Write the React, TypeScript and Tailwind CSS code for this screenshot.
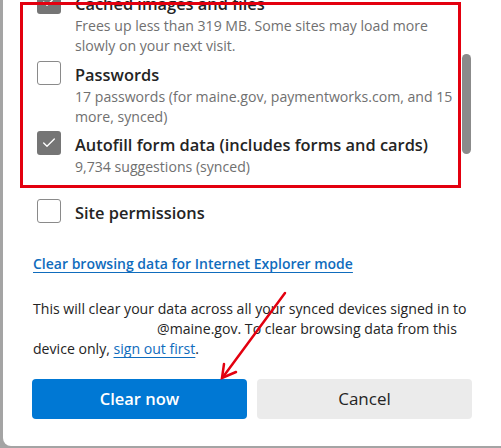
import { Check } from "lucide-react"

type Row = {
    title: string
    desc: string[]
    checked: boolean
    top: string
}

const rows: Row[] = [
    { title: "Cached images and files", desc: ["Frees up less than 319 MB. Some sites may load more", "slowly on your next visit."], checked: true, top: "mt-[-10px]" },
    { title: "Passwords", desc: ["17 passwords (for maine.gov, paymentworks.com, and 15", "more, synced)"], checked: false, top: "mt-[5px]" },
    { title: "Autofill form data (includes forms and cards)", desc: ["9,734 suggestions (synced)"], checked: true, top: "mt-[4px]" },
    { title: "Site permissions", desc: [], checked: false, top: "mt-[22px]" },
]

function Box({ checked }: { checked: boolean }) {
    if (checked) {
        return (
            <div className="w-6 h-6 shrink-0 rounded-[3px] bg-[#757575] flex items-center justify-center">
                <Check className="w-4 h-4 text-white" strokeWidth={2} />
            </div>
        )
    }
    return <div className="w-6 h-6 shrink-0 rounded-[3px] border border-[#8a8a8a] bg-white" />
}

export default function App() {
    return (
        <div className="w-[501px] h-[448px] bg-[#a4a4a4] overflow-hidden" style={{ fontFamily: '"Segoe UI", "Open Sans", sans-serif' }}>
            <div className="relative ml-[3px] h-[446px] bg-white rounded-bl-[8px] overflow-hidden">
                <div className="pl-[34px]">
                    {rows.map(r => (
                        <div key={r.title} className={`flex items-start gap-[14px] ${r.top}`}>
                            <Box checked={r.checked} />
                            <div className="pt-[2px] whitespace-nowrap">
                                <div className="text-[16.4px] leading-[24px] font-semibold text-[#242424]">{r.title}</div>
                                {r.desc.map(d => (
                                    <div key={d} className="text-[14.1px] leading-[20px] text-[#707070]">{d}</div>
                                ))}
                            </div>
                        </div>
                    ))}
                </div>

                <div className="pl-[30px] mt-[28px] leading-[20px]">
                    <a className="text-[14px] font-semibold text-[#0f6cbd] underline underline-offset-[3px]">
                        Clear browsing data for Internet Explorer mode
                    </a>
                </div>

                <div className="pl-[30px] mt-[25px] text-[14.1px] leading-[20px] text-[#242424] whitespace-nowrap">
                    <div>This will clear your data across all your synced devices signed in to</div>
                    <div><span className="inline-block w-[124px]" />@maine.gov. To clear browsing data from this</div>
                    <div>device only, <a className="text-[#0f6cbd] underline underline-offset-[3px]">sign out first</a>.</div>
                </div>

                <div className="flex gap-[10px] pl-[29px] pr-[27px] mt-[20px]">
                    <button className="w-[215px] h-[40px] rounded-[4px] bg-[#0078d4] text-white text-[16.5px] font-semibold">Clear now</button>
                    <button className="w-[215px] h-[40px] rounded-[4px] bg-[#ebebeb] text-[#242424] text-[17px]">Cancel</button>
                </div>

                {/* scrollbar thumb */}
                <div className="absolute left-[459px] top-[54px] w-[9px] h-[100px] rounded-full bg-[#8b8b8b]" />

                {/* red annotation box */}
                <div className="absolute left-[17px] top-[2px] w-[441px] h-[186px] border-[3px] border-[#e3000f]" />

                {/* red arrow */}
                <svg className="absolute left-0 top-0" width="498" height="446" viewBox="0 0 498 446">
                    <g stroke="#e3000f" strokeWidth="2.5" strokeLinecap="round" fill="none">
                        <line x1="282" y1="293" x2="220" y2="377" />
                        <polyline points="221,364 219,378 233,372" />
                    </g>
                </svg>
            </div>
        </div>
    )
}
